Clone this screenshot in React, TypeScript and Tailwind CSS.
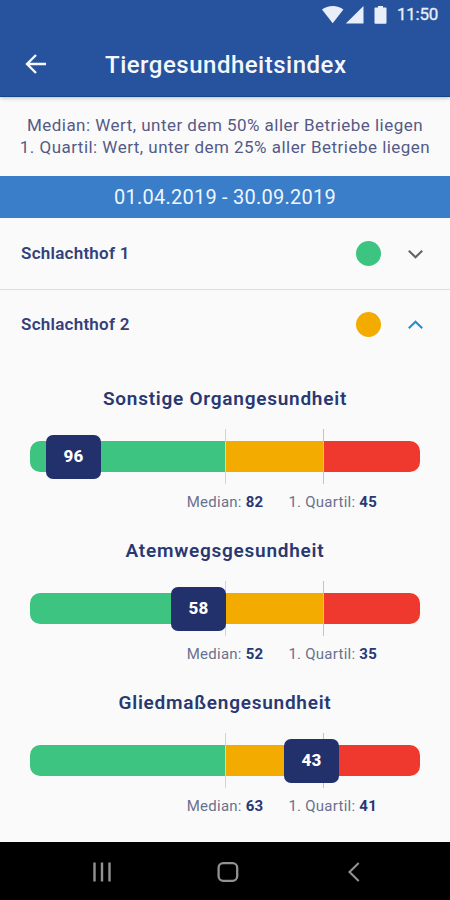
import { useState } from "react";

const FARMS = [
  { name: "Schlachthof 1", color: "bg-[#3dc480]" },
  { name: "Schlachthof 2", color: "bg-[#f3ab00]" },
];

// pos = left edge of the value badge, in px from the start of the bar
const GAUGES = [
  { title: "Sonstige Organgesundheit", value: 96, pos: 16, median: 82, quartil: 45 },
  { title: "Atemwegsgesundheit", value: 58, pos: 141, median: 52, quartil: 35 },
  { title: "Gliedmaßengesundheit", value: 43, pos: 254, median: 63, quartil: 41 },
];

function StatusBar() {
  return (
    <div className="flex h-[30px] items-center justify-end pr-3 text-[#e9effa]">
      <svg width="66" height="20" viewBox="0 0 66 20" fill="currentColor" className="mr-[9px]">
        <path d="M0 4.6C5.9-0.3 15.9-0.3 21.4 4.6L10.7 18.2Z" />
        <path d="M41.5 1V18.6H23.8Z" />
        <path d="M56 1h5v1.5h2.7q.8 0 .8.8v14.5q0 .9-.8.9h-10.4q-.8 0-.8-.9v-14.5q0-.8.8-.8h2.7Z" />
      </svg>
      <span className="mb-px text-[17px] leading-none tracking-[-0.25px] [-webkit-text-stroke:0.3px]">
        11:50
      </span>
    </div>
  );
}

function Chevron({ open }: { open: boolean }) {
  return (
    <svg
      width="16"
      height="10"
      viewBox="0 0 16 10"
      fill="none"
      strokeWidth="2.1"
      className={open ? "stroke-[#238fd0]" : "stroke-[#636363]"}
    >
      <path d={open ? "M0.8 8.3L7.5 1.8L14.2 8.3" : "M0.8 1.7L7.5 8.2L14.2 1.7"} />
    </svg>
  );
}

function Gauge({ title, value, pos, median, quartil }: (typeof GAUGES)[number]) {
  return (
    <section className="h-[152px] px-[30px]">
      <h2 className="text-center text-[19px] font-semibold leading-[22px] tracking-[0.75px] text-[#283872]">
        {title}
      </h2>
      <div className="relative mt-[19px] flex h-[55px] items-center">
        <div className="flex h-[31px] w-full overflow-hidden rounded-[10px]">
          <div className="w-1/2 bg-[#3dc480]" />
          <div className="w-1/4 bg-[#f3ab00]" />
          <div className="w-1/4 bg-[#f0392e]" />
        </div>
        <div className="absolute left-1/2 top-0 h-full w-px bg-[#d4d4d4]" />
        <div className="absolute left-3/4 top-0 h-full w-px bg-[#c4c4c4]" />
        <div
          className="absolute top-[6px] flex h-[44px] w-[55px] items-center justify-center rounded-[7px] bg-[#22306b] text-[17px] font-extrabold tracking-[0.3px] text-white"
          style={{ left: pos }}
        >
          {value}
        </div>
      </div>
      <div className="mt-[8px] flex justify-end gap-[25px] pr-[43px] text-[15px] leading-5 tracking-[0.25px] text-[#6a7090]">
        <p>
          Median: <b className="text-[#283872]">{median}</b>
        </p>
        <p>
          1. Quartil: <b className="text-[#283872]">{quartil}</b>
        </p>
      </div>
    </section>
  );
}

export default function App() {
  const [open, setOpen] = useState(1);

  return (
    <div className="flex h-[900px] w-[450px] flex-col overflow-hidden bg-[#fafafa] font-['Roboto',sans-serif]">
      <header className="z-10 h-[97px] shrink-0 border-b border-[#174489] bg-[#27539e] shadow-[0_1px_4px_rgba(0,0,0,0.25)]">
        <StatusBar />
        <div className="flex h-[68px] items-center pl-[25px]">
          <button aria-label="Zurück">
            <svg width="22" height="20" viewBox="0 0 22 20" fill="none" stroke="#f4f7ff" strokeWidth="2.4">
              <path d="M21 10H2.5M11 1L2 10L11 19" />
            </svg>
          </button>
          <h1 className="ml-[58px] mt-[2px] whitespace-nowrap text-[24px] font-medium leading-none tracking-[0.5px] text-[#f4f7ff]">
            Tiergesundheitsindex
          </h1>
        </div>
      </header>

      <div className="whitespace-nowrap pt-[17px] text-center text-[17px] leading-[22px] tracking-[0.47px] text-[#555a86]">
        <p>Median: Wert, unter dem 50% aller Betriebe liegen</p>
        <p>1. Quartil: Wert, unter dem 25% aller Betriebe liegen</p>
      </div>

      <div className="mt-[18px] flex h-[42px] shrink-0 items-center justify-center bg-[#3a7dc8] text-[20px] tracking-[0.25px] text-[#eef6ff]">
        01.04.2019 - 30.09.2019
      </div>

      {FARMS.map((farm, i) => (
        <button
          key={farm.name}
          onClick={() => setOpen(i)}
          className={`flex shrink-0 items-center pl-[21px] pr-[26px] ${i === 0 ? "h-[72px] border-b border-[#dedede]" : "h-[69px]"}`}
        >
          <span className="flex-1 text-left text-[17px] font-semibold tracking-[0.25px] text-[#334079]">
            {farm.name}
          </span>
          <span className={`mr-[27px] size-[25px] rounded-full ${farm.color}`} />
          <Chevron open={open === i} />
        </button>
      ))}

      <main className="flex-1 overflow-hidden pt-[29px]">
        {GAUGES.map((g) => (
          <Gauge key={g.title} {...g} />
        ))}
      </main>

      <nav className="flex h-[58px] shrink-0 items-center bg-black pl-[92px] pt-px">
        <svg width="20" height="20" viewBox="0 0 20 20" stroke="#929292" strokeWidth="2.4">
          <path d="M2.5 0.5V19.5M10 0.5V19.5M17.5 0.5V19.5" />
        </svg>
        <svg width="22" height="20" viewBox="0 0 22 20" fill="none" stroke="#929292" strokeWidth="2.3" className="ml-[105px]">
          <rect x="1.6" y="1.2" width="18.6" height="17.6" rx="4.6" />
        </svg>
        <svg width="13" height="20" viewBox="0 0 13 20" fill="none" stroke="#929292" strokeWidth="2.1" className="ml-[108px]">
          <path d="M11.7 1L2.5 10L11.7 19" />
        </svg>
      </nav>
    </div>
  );
}
